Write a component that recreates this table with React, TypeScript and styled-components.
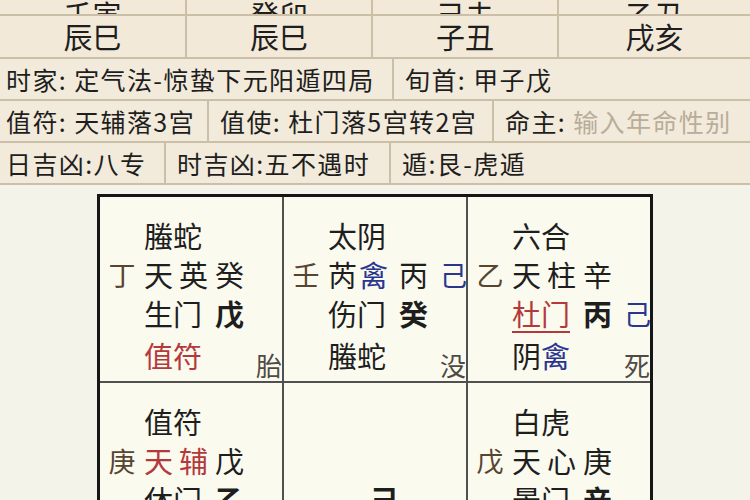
import React from "react";
import styled, { createGlobalStyle } from "styled-components";

const Global = createGlobalStyle`
  html, body { margin: 0; padding: 0; }
  body {
    width: 750px; height: 500px; overflow: hidden;
    background: #f4f3ea;
    font-family: "Noto Sans CJK SC", "Noto Sans", sans-serif;
    color: #1e1e1e;
  }
`;

const Page = styled.div`
  width: 750px;
  height: 500px;
  overflow: hidden;
  display: flex;
  flex-direction: column;
`;

const Header = styled.div`
  flex-shrink: 0;
  background: #f2e9d8;
  display: flex;
  flex-direction: column;
`;

const PillarRow = styled.div<{ $h: number }>`
  flex-shrink: 0;
  display: grid;
  grid-template-columns: 187px 186px 186px 1fr;
  height: ${(p) => p.$h}px;
  border-bottom: 2px solid #cbbfa7;
  overflow: hidden;
`;

const PillarCell = styled.div<{ $clip?: boolean }>`
  display: flex;
  justify-content: center;
  align-items: ${(p) => (p.$clip ? "flex-end" : "center")};
  border-right: 2px solid #cbbfa7;
  font-size: 29px;
  line-height: 1;
  &:last-child { border-right: none; }
`;

const ClipText = styled.span`
  margin-bottom: 3px;
`;

const InfoRow = styled.div`
  flex-shrink: 0;
  display: flex;
  height: 40px;
  border-bottom: 2px solid #cbbfa7;
  background: #f2eada;
`;

const InfoCell = styled.div<{ $w?: number }>`
  flex: ${(p) => (p.$w ? `0 0 ${p.$w}px` : "1 1 auto")};
  box-sizing: border-box;
  display: flex;
  align-items: center;
  padding-left: 11px;
  border-right: 2px solid #cbbfa7;
  font-size: 25px;
  letter-spacing: 1.4px;
  white-space: nowrap;
  overflow: hidden;
  &:first-child { padding-left: 6px; }
  &:last-child { border-right: none; }
`;

const Hint = styled.span`
  color: #b9ad9b;
`;

const Board = styled.div`
  flex: 1 1 auto;
  min-height: 0;
  background: #f4f3ea;
  padding: 9px 0 0 97px;
`;

const Grid = styled.div`
  display: grid;
  grid-template-columns: repeat(3, 182px);
  grid-auto-rows: 184px;
  gap: 2px;
  width: max-content;
  background: #505050;
  border: 3px solid #161616;
`;

const Palace = styled.div`
  background: #fbfaef;
  display: grid;
  grid-template-columns: 44px 71px 41px 1fr;
  grid-template-rows: 39px 39px 39px 45px;
  padding-top: 19px;
  overflow: hidden;
`;

const Glyph = styled.div<{
  $c: number;
  $r: number;
  $color?: string;
  $bold?: boolean;
  $size?: number;
  $end?: boolean;
  $justify?: string;
  $spacing?: number;
  $under?: boolean;
}>`
  grid-column: ${(p) => p.$c};
  grid-row: ${(p) => p.$r};
  align-self: ${(p) => (p.$end ? "end" : "center")};
  justify-self: ${(p) => p.$justify || "start"};
  font-size: ${(p) => p.$size || 29}px;
  line-height: 1;
  font-weight: ${(p) => (p.$bold ? 700 : 400)};
  color: ${(p) => p.$color || "#1e1e1e"};
  letter-spacing: ${(p) => p.$spacing || 0}px;
  white-space: nowrap;
  ${(p) =>
    p.$under
      ? `text-decoration: underline; text-decoration-thickness: 2px; text-underline-offset: 5px;`
      : ""}
`;

const Blue = styled.span`
  color: #2a3590;
`;

const SIDE = "#56452f";
const RED = "#b3393b";
const BLUE = "#2a3590";
const STATE = "#4f4a44";

export default function App() {
  return (
    <>
      <Global />
      <Page>
        <Header>
          <PillarRow $h={14}>
            <PillarCell $clip><ClipText>壬寅</ClipText></PillarCell>
            <PillarCell $clip><ClipText>癸卯</ClipText></PillarCell>
            <PillarCell $clip><ClipText>己未</ClipText></PillarCell>
            <PillarCell $clip><ClipText>乙丑</ClipText></PillarCell>
          </PillarRow>
          <PillarRow $h={41}>
            <PillarCell>辰巳</PillarCell>
            <PillarCell>辰巳</PillarCell>
            <PillarCell>子丑</PillarCell>
            <PillarCell>戌亥</PillarCell>
          </PillarRow>
        </Header>
        <InfoRow>
          <InfoCell $w={394}>时家: 定气法-惊蛰下元阳遁四局</InfoCell>
          <InfoCell>旬首: 甲子戊</InfoCell>
        </InfoRow>
        <InfoRow>
          <InfoCell $w={209}>值符: 天辅落3宫</InfoCell>
          <InfoCell $w={285}>值使: 杜门落5宫转2宫</InfoCell>
          <InfoCell>
            命主:&nbsp;<Hint>输入年命性别</Hint>
          </InfoCell>
        </InfoRow>
        <InfoRow>
          <InfoCell $w={166}>日吉凶:八专</InfoCell>
          <InfoCell $w={225}>时吉凶:五不遇时</InfoCell>
          <InfoCell>遁:艮-虎遁</InfoCell>
        </InfoRow>
        <Board>
          <Grid>
            <Palace>
              <Glyph $c={2} $r={1}>螣蛇</Glyph>
              <Glyph $c={1} $r={2} $color={SIDE} $size={27} $justify="center">丁</Glyph>
              <Glyph $c={2} $r={2} $spacing={6}>天英</Glyph>
              <Glyph $c={3} $r={2}>癸</Glyph>
              <Glyph $c={2} $r={3}>生门</Glyph>
              <Glyph $c={3} $r={3} $bold>戊</Glyph>
              <Glyph $c={2} $r={4} $color={RED}>值符</Glyph>
              <Glyph $c={4} $r={4} $end $size={26} $color={STATE}>胎</Glyph>
            </Palace>
            <Palace>
              <Glyph $c={2} $r={1}>太阴</Glyph>
              <Glyph $c={1} $r={2} $color={SIDE} $size={27} $justify="center">壬</Glyph>
              <Glyph $c={2} $r={2} $spacing={2}>芮<Blue>禽</Blue></Glyph>
              <Glyph $c={3} $r={2}>丙</Glyph>
              <Glyph $c={4} $r={2} $color={BLUE} $size={27}>己</Glyph>
              <Glyph $c={2} $r={3}>伤门</Glyph>
              <Glyph $c={3} $r={3} $bold>癸</Glyph>
              <Glyph $c={2} $r={4}>螣蛇</Glyph>
              <Glyph $c={4} $r={4} $end $size={26} $color={STATE}>没</Glyph>
            </Palace>
            <Palace>
              <Glyph $c={2} $r={1}>六合</Glyph>
              <Glyph $c={1} $r={2} $color={SIDE} $size={27} $justify="center">乙</Glyph>
              <Glyph $c={2} $r={2} $spacing={6}>天柱</Glyph>
              <Glyph $c={3} $r={2}>辛</Glyph>
              <Glyph $c={2} $r={3} $color={RED} $under>杜门</Glyph>
              <Glyph $c={3} $r={3} $bold>丙</Glyph>
              <Glyph $c={4} $r={3} $color={BLUE} $size={27}>己</Glyph>
              <Glyph $c={2} $r={4}>阴<Blue>禽</Blue></Glyph>
              <Glyph $c={4} $r={4} $end $size={26} $color={STATE}>死</Glyph>
            </Palace>
            <Palace>
              <Glyph $c={2} $r={1}>值符</Glyph>
              <Glyph $c={1} $r={2} $color={SIDE} $size={27} $justify="center">庚</Glyph>
              <Glyph $c={2} $r={2} $spacing={6} $color={RED}>天辅</Glyph>
              <Glyph $c={3} $r={2}>戊</Glyph>
              <Glyph $c={2} $r={3}>休门</Glyph>
              <Glyph $c={3} $r={3} $bold>乙</Glyph>
            </Palace>
            <Palace>
              <Glyph $c={2} $r={3} $bold $justify="end">己</Glyph>
            </Palace>
            <Palace>
              <Glyph $c={2} $r={1}>白虎</Glyph>
              <Glyph $c={1} $r={2} $color={SIDE} $size={27} $justify="center">戊</Glyph>
              <Glyph $c={2} $r={2} $spacing={6}>天心</Glyph>
              <Glyph $c={3} $r={2}>庚</Glyph>
              <Glyph $c={2} $r={3}>景门</Glyph>
              <Glyph $c={3} $r={3} $bold>辛</Glyph>
            </Palace>
          </Grid>
        </Board>
      </Page>
    </>
  );
}
